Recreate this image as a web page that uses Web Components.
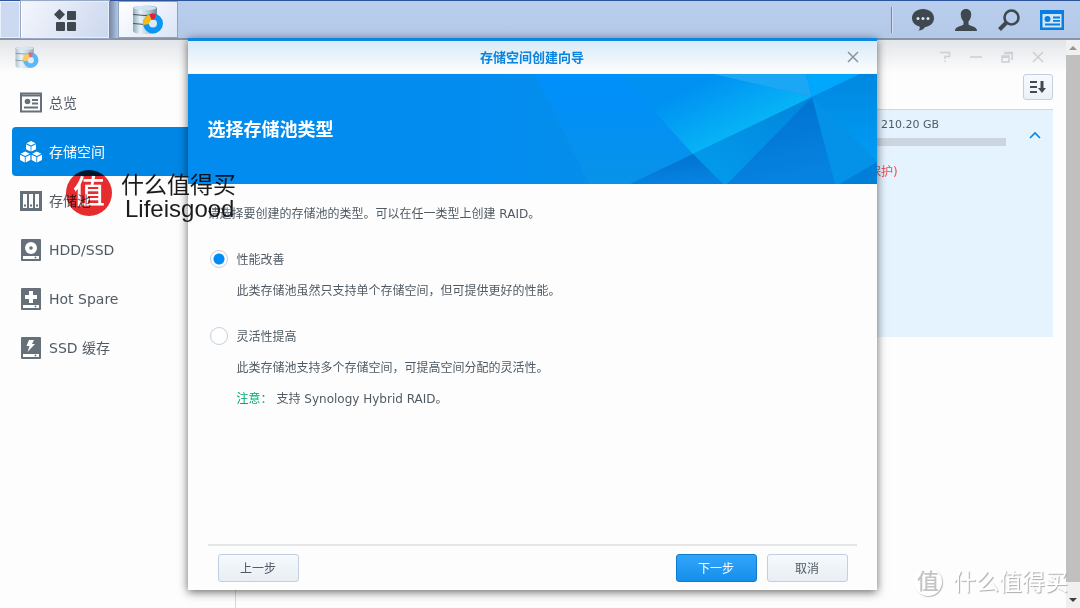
<!DOCTYPE html>
<html lang="zh-CN">
<head>
<meta charset="utf-8">
<title>存储空间管理员</title>
<style>
html,body{margin:0;height:100%}
body{font-family:"DejaVu Sans","Noto Sans CJK SC",sans-serif;font-size:12px;line-height:20px;color:#505a64;background:#fdfdfd;overflow:hidden}
</style>
</head>
<body>
<nas-desktop></nas-desktop>

<script>
const define = (name, html) => customElements.define(name, class extends HTMLElement {
  constructor() {
    super();
    const t = document.createElement('template');
    t.innerHTML = html;
    this.attachShadow({ mode: 'open' }).append(t.content.cloneNode(true));
  }
});

const icons = {
  overview: `<rect x="1" y="1.5" width="20" height="18" fill="none" stroke="currentColor" stroke-width="2"/><path d="M1 3.5h20" stroke="currentColor" stroke-width="2"/><circle cx="7.5" cy="9.5" r="2.8" fill="currentColor"/><path d="M12 8h6M12 11.5h6M4 15.5h14" stroke="currentColor" stroke-width="1.8"/>`,
  volume: `<g fill="currentColor"><path d="M11 0l4.6 2.2L11 4.6 6.4 2.2z"/><path d="M6 3.2l4.6 2.3v5L6 8.200z"/><path d="M16 3.200l-4.600 2.300v5l4.600-2.300z"/><path d="M5.200 10.500l4.600 2.200-4.600 2.400L.6 12.700z"/><path d="M0 13.700l4.800 2.300v5.500L0 19z"/><path d="M10.400 13.700L5.700 16v5.500l4.700-2.500z"/><path d="M16.800 10.500l4.600 2.200-4.600 2.400-4.600-2.400z"/><path d="M11.600 13.700l4.700 2.300v5.500L11.600 19z"/><path d="M22 13.700L17.200 16v5.500L22 19z"/></g>`,
  pool: `<path fill="currentColor" fill-rule="evenodd" d="M0 1h22v20H0zM3 4v14h4V4zm6 0v14h4V4zm6 0v14h4V4z"/><path d="M4 15.500h2M10 15.500h2M16 15.500h2" stroke="currentColor" stroke-width="2"/>`,
  hdd: `<rect x="1" y="0" width="20" height="22" rx="1" fill="currentColor"/><circle cx="11" cy="9" r="6" fill="#fff"/><circle cx="11" cy="9" r="1.800" fill="currentColor"/><path d="M3 17h16v3H3z" fill="#fff"/><circle cx="15.500" cy="18.500" r=".9" fill="currentColor"/>`,
  spare: `<rect x="1" y="0" width="20" height="22" rx="1" fill="currentColor"/><path d="M9 3h4v4h4v4h-4v4H9v-4H5V7h4zM3 17h16v3H3z" fill="#fff"/><circle cx="15.500" cy="18.500" r=".9" fill="currentColor"/>`,
  cache: `<rect x="1" y="0" width="20" height="22" rx="1" fill="currentColor"/><path d="M9 3h5l-2 4h3l-7.500 8 2-6H6.500zM3 17h16v3H3z" fill="#fff"/><circle cx="15.500" cy="18.500" r=".9" fill="currentColor"/>`
};

define('storage-logo', `
<style>:host{display:block;width:30px;height:30px}svg{display:block;width:100%;height:100%}</style>
<svg viewBox="0 0 30 30" aria-hidden="true">
 <defs><linearGradient id="c"><stop stop-color="#8fa9b9"/><stop offset=".3" stop-color="#e6f3fa"/><stop offset=".65" stop-color="#b4cad8"/><stop offset="1" stop-color="#6d8a9d"/></linearGradient></defs>
 <path d="M0 3q0-2.500 12-2.500T24 3v23q0 3-12 3T0 26z" fill="url(#c)"/>
 <ellipse cx="12" cy="3" rx="11.500" ry="2" fill="#cfe3f0"/>
 <path d="M0 9.500q12 2 24 0M0 18.500q12 2 24 0" fill="none" stroke="#47545e"/>
 <circle cx="20" cy="18.500" r="7" fill="#dbe9f2" stroke="#0a96f5" stroke-width="6"/>
 <path d="M13.100 19.500A7 7 0 0 1 17.500 12" fill="none" stroke="#fdb813" stroke-width="6"/>
 <path d="M17.500 12a7 7 0 0 1 4.500 -.2" fill="none" stroke="#e8202c" stroke-width="6"/>
</svg>`);

define('task-bar', `
<style>
:host{display:flex;box-sizing:border-box;height:40px;align-items:stretch;background:linear-gradient(#b9cdec,#b4c8e8);border-top:1px solid #2c559c;border-bottom:2px solid #8795a6}
button{all:unset;box-sizing:border-box;display:flex;align-items:center;justify-content:center}
.edge{width:20px;box-sizing:border-box;background:#ccd9f1;border:1px solid #eaf0fa}
.menu{width:88px;margin-left:1px;background:linear-gradient(120deg,#f4f6fc,#ccd8ef);border:1px solid #e8eefa;border-left-color:#fff;outline:1px solid #98a9c6}
.slot{width:9px;background:linear-gradient(90deg,#7283a3,#b4c7e8)}
.app{width:60px;background:linear-gradient(135deg,#fff,#dbe4f6);border:1px solid #fff;outline:1px solid #8fa1c0;outline-offset:-1px}
.tray{margin-left:auto;display:flex;align-items:center;padding-right:7px}
.tray i{width:1px;height:26px;background:#7186ab;border-right:1px solid #d3e0f5;margin-right:8px}
.tray button{width:43px;height:37px}
svg{display:block}
</style>
<span class="edge"></span>
<button class="menu" aria-label="主菜单"><svg width="22" height="22" viewBox="0 0 22 22" fill="#3f474f"><path d="M5.500 0L11 5.500 5.500 11 0 5.500z"/><rect x="13" y="2" width="9" height="9" rx="1"/><rect x="2" y="13" width="9" height="9" rx="1"/><rect x="13" y="13" width="9" height="9" rx="1"/></svg></button>
<span class="slot"></span>
<button class="app" aria-label="存储空间管理员"><storage-logo></storage-logo></button>
<div class="tray"><i></i>
<button aria-label="通知"><svg width="22" height="22" viewBox="0 0 22 22"><path d="M11 0c6 0 11 3.800 11 9s-4 8.500-9 9c-1 2-3.500 3.500-6.500 3.500 1.200-1 1.500-2.500 1-4C3 16.500 0 13 0 9c0-5.200 5-9 11-9z" fill="#3f474f"/><g fill="#dbe6f6"><circle cx="6" cy="9.500" r="1.500"/><circle cx="11" cy="9.500" r="1.500"/><circle cx="16" cy="9.500" r="1.500"/></g></svg></button>
<button aria-label="用户"><svg width="22" height="22" viewBox="0 0 22 22"><path d="M11 0c3.500 0 5.500 2.500 5.200 6-.2 3-1.400 5-2.700 6.500v3c1 1.500 8.500 1.500 8.500 6.500H0c0-5 7.500-5 8.500-6.500v-3C7.200 11 6 9 5.800 6 5.500 2.500 7.500 0 11 0z" fill="#3f474f"/></svg></button>
<button aria-label="搜索"><svg width="22" height="22" viewBox="0 0 22 22" fill="none" stroke="#3f474f"><circle cx="13.500" cy="8.500" r="7" stroke-width="2.600"/><path d="M8.500 13.500L1.500 20.500" stroke-width="4"/></svg></button>
<button aria-label="小工具"><svg width="24" height="20" viewBox="0 0 24 20"><path d="M0 0h24v20H0z" fill="#087fe0"/><path d="M2.500 4h19v13.500h-19z" fill="#d2e6fa"/><circle cx="7.500" cy="9" r="3" fill="#087fe0"/><path d="M13 7.500h7M13 10.800h7M5 14.500h15" stroke="#087fe0" stroke-width="1.800"/></svg></button>
</div>`);

customElements.define('nav-item', class extends HTMLElement {
  connectedCallback() {
    const on = this.hasAttribute('selected');
    this.attachShadow({ mode: 'open' }).innerHTML = `
<style>
:host{display:block}
a{display:flex;align-items:center;gap:7px;height:49px;padding-left:8px;border-radius:4px;font-size:14px;color:#505a64;text-decoration:none}
a svg{width:22px;height:22px;color:#66707a;flex:none}
a.on{background:#0086e5;color:#fff}a.on svg{color:#fff}
</style>
<a href="#${this.getAttribute('icon')}" ${on ? 'class="on" aria-current="page"' : ''}><svg viewBox="0 0 22 22" aria-hidden="true">${icons[this.getAttribute('icon')]}</svg><slot></slot></a>`;
  }
});

define('side-nav', `
<style>:host{display:block;box-sizing:border-box;width:236px;flex:none;border-right:1px solid #d8d8d8;padding:0 0 0 12px}nav{display:block}</style>
<nav><slot></slot></nav>`);

define('volume-card', `
<style>
:host{display:flex;box-sizing:border-box;height:228px;background:#e5f3ff;border-top:1px solid #c9dbe8}
.body{flex:1}
.info{box-sizing:border-box;width:137px;margin-left:auto}
.size{padding:6px 0 0 12px;font-size:11px;line-height:18px}
.bar{height:8px;background:#ccd4df;margin:4px 0 16px}
.state{color:#f05050}
button{all:unset;box-sizing:border-box;width:47px;height:50px;display:flex;align-items:center;justify-content:center;padding-left:10px}
</style>
<div class="body"><div class="info size"><slot name="size"></slot></div><div class="bar"></div><div class="info state"><slot name="state"></slot></div></div>
<button aria-label="收起"><svg width="12" height="8" viewBox="0 0 12 8" fill="none" stroke="#0086e5" stroke-width="1.600"><path d="M1 7l5-5 5 5"/></svg></button>`);

define('storage-window', `
<style>
:host{display:flex;flex-direction:column;min-width:0;flex:1;background:linear-gradient(#e2e5e9,#fdfdfd 32px)}
header{display:flex;align-items:flex-start;height:38px;box-sizing:border-box;padding:6px 13px 0 15px}
storage-logo{width:24px;height:23px;opacity:.65}
.ctl{margin-left:auto;display:flex}
.ctl button{all:unset;width:31px;height:22px;display:flex;align-items:center;justify-content:center}
.ctl svg{fill:none;stroke:#ccd0d3;stroke-width:1.500}
.cols{flex:1;display:flex;min-height:0}
main{flex:1;padding:0 13px 0 20px;min-width:0;margin-top:-4px}
.tools{display:flex;justify-content:flex-end;height:35px}
.sort{all:unset;box-sizing:border-box;width:30px;height:26px;border:1px solid #c3cede;border-radius:3px;background:linear-gradient(#f6fafd,#ecf1f6);display:flex;align-items:center;justify-content:center}
</style>
<header><storage-logo></storage-logo><div class="ctl">
<button aria-label="帮助"><svg width="12" height="12" viewBox="0 0 12 12"><path d="M1 1.500h9.500v4H6V8M6 9.500V11"/></svg></button>
<button aria-label="最小化"><svg width="12" height="12" viewBox="0 0 12 12"><path d="M0 6h12"/></svg></button>
<button aria-label="还原"><svg width="12" height="12" viewBox="0 0 12 12"><path d="M1 5h7v6H1zM1 6.200h7M4 3.500V1.500h7.300V8H10M4 2.500h7"/></svg></button>
<button aria-label="关闭"><svg width="12" height="12" viewBox="0 0 12 12"><path d="M1 1l10 10M11 1L1 11"/></svg></button>
</div></header>
<div class="cols">
<side-nav>
<nav-item icon="overview">总览</nav-item>
<nav-item icon="volume" selected>存储空间</nav-item>
<nav-item icon="pool">存储池</nav-item>
<nav-item icon="hdd">HDD/SSD</nav-item>
<nav-item icon="spare">Hot Spare</nav-item>
<nav-item icon="cache">SSD 缓存</nav-item>
</side-nav>
<main><div class="tools"><button class="sort" aria-label="排序"><svg width="16" height="14" viewBox="0 0 16 14"><path d="M0 2h7M0 7h7M0 12h7" stroke="#404a54" stroke-width="2"/><path d="M10.500 1h3v7H16l-4 5-4-5h2.500z" fill="#404a54"/></svg></button></div>
<volume-card><span slot="size">210.20 GB</span><span slot="state">保护)</span></volume-card></main>
</div>`);

define('scroll-rail', `
<style>
:host{display:flex;flex-direction:column;width:14px;flex:none;background:#f0f0f0}
i{height:15px;display:flex;align-items:center;justify-content:center}
i:last-child{height:26px;padding-top:9px;box-sizing:border-box}
b{flex:1;background:#c0c0c0}
</style>
<i><svg width="8" height="4"><path d="M4 0l4 4H0z" fill="#949494"/></svg></i><b></b><i><svg width="8" height="4"><path d="M0 0h8L4 4z" fill="#404040"/></svg></i>`);

define('pool-option', `
<style>
:host{display:grid;grid-template-columns:29px 1fr;row-gap:11px;margin-top:26px}
label{display:contents}
input{appearance:none;box-sizing:border-box;width:18px;height:18px;margin:0 0 0 2px;border:1px solid #c2cfe0;border-radius:50%;background:#fff}
input:checked{background:radial-gradient(circle,#008cf5 5px,#fff 6px)}
.more{grid-column:2;display:grid;row-gap:11px}
</style>
<label><input type="radio" name="pool"><span><slot name="name"></slot></span></label>
<div class="more"><slot></slot></div>`);

define('wizard-button', `
<style>
:host{display:block}
button{box-sizing:border-box;width:81px;height:28px;padding:2px 0 0;border:1px solid #c3cede;border-radius:3px;background:linear-gradient(#f5fafe,#e8eef3);font:inherit;line-height:20px;color:#505a64;display:block}
:host([primary]) button{border-color:#0b7cd0;background:linear-gradient(#33a5fb,#148fea);color:#fff}
</style><button><slot></slot></button>`);

define('wizard-dialog', `
<style>
:host{display:flex;flex-direction:column;box-sizing:border-box;width:689px;max-width:100%;background:#fdfdfd;border-top:3px solid #0a88e2;box-shadow:0 2px 9px rgba(0,0,0,.6)}
header{display:grid;grid-template-columns:48px 1fr 48px;align-items:center;height:32px;border-bottom:1px solid #f2f6fa;background:linear-gradient(#d8eaf8,#fdfdfd)}
h1{grid-column:2;margin:0;padding-top:2px;text-align:center;font-size:13px;line-height:20px;color:#0a84de}
header button{all:unset;height:32px;display:flex;align-items:center;justify-content:center}
.banner{display:grid;height:110px;background:#028cf0;align-items:center}
.banner>*{grid-area:1/1}
.banner svg{width:100%;height:110px;display:block}
h2{margin:0;padding:2px 0 0 20px;font-size:18px;line-height:24px;color:#fff}
.body{flex:1;padding:20px 20px 0}
footer{display:flex;gap:10px;margin:0 20px;padding:8px 9px 8px 10px;border-top:2px solid #e4e5e6}
wizard-button:first-child{margin-right:auto}
p{margin:0}
.note{color:#00a970;margin-right:4px}
</style>
<header><h1>存储空间创建向导</h1><button aria-label="关闭"><svg width="12" height="12" fill="none" stroke="#8a949e" stroke-width="1.500"><path d="M1 1l10 10M11 1L1 11"/></svg></button></header>
<div class="banner">
<svg viewBox="0 0 689 110" preserveAspectRatio="xMaxYMid slice" aria-hidden="true">
<defs>
<linearGradient id="a" x1="0" y1="0" x2="1" y2="0"><stop stop-color="#028cf0"/><stop offset="1" stop-color="#058eea"/></linearGradient>
<linearGradient id="b" x1="0" y1="0" x2="0" y2="1"><stop stop-color="#008ffd"/><stop offset="1" stop-color="#0892e8"/></linearGradient>
<linearGradient id="c" gradientUnits="userSpaceOnUse" x1="528" y1="0" x2="558" y2="60"><stop stop-color="#0091f2"/><stop offset="1" stop-color="#07b6f6"/></linearGradient>
<linearGradient id="d" x1="0" y1="0" x2=".3" y2="1"><stop stop-color="#006fcd"/><stop offset="1" stop-color="#0682e0"/></linearGradient>
<linearGradient id="e" x1="1" y1="0" x2="0" y2="1"><stop stop-color="#0084dc"/><stop offset="1" stop-color="#039ded"/></linearGradient>
<linearGradient id="f" x1="0" y1="0" x2="0" y2="1"><stop stop-color="#0088e0"/><stop offset="1" stop-color="#009cf5"/></linearGradient>
</defs>
<path d="M290 0h58l54 110H290z" fill="url(#a)"/>
<path d="M347 0h88l71 80-64 30h-41z" fill="url(#b)"/>
<path d="M432 0h93l99 23-119 57z" fill="url(#c)"/>
<path d="M525 0h93l6 23z" fill="#1ba7f3"/>
<path d="M618 0h54l-48 23z" fill="#00a8fd"/>
<path d="M672 0h17v88l-65-65z" fill="url(#f)"/>
<path d="M624 23l65 64v1l-37 22h-5z" fill="#0492e9"/>
<path d="M689 88v22h-37z" fill="#007fd9"/>
<path d="M624 23l23 87H539z" fill="url(#d)"/>
<path d="M624 23l-85 87h-4l-30-30z" fill="url(#e)"/>
<path d="M505 80l30 30h-93z" fill="url(#d)"/>
</svg>
<h2>选择存储池类型</h2></div>
<div class="body">
<p>请选择要创建的存储池的类型。可以在任一类型上创建 RAID。</p>
<pool-option><span slot="name">性能改善</span><span>此类存储池虽然只支持单个存储空间，但可提供更好的性能。</span></pool-option>
<pool-option><span slot="name">灵活性提高</span><span>此类存储池支持多个存储空间，可提高空间分配的灵活性。</span><div><span class="note">注意：</span><span>支持 Synology Hybrid RAID。</span></div></pool-option>
</div>
<footer><wizard-button>上一步</wizard-button><wizard-button primary>下一步</wizard-button><wizard-button>取消</wizard-button></footer>`);

define('brand-mark', `
<style>
:host{display:flex;align-items:center;pointer-events:none;gap:9px;font-size:23px;line-height:24px;color:#1c1c1c}
.seal{width:46px;height:46px;border-radius:50%;background:#e92c30;color:#fff;font-weight:500;font-size:32px;line-height:44px;text-align:center;flex:none}
.words{padding-top:8px}
.sub{font-family:"Liberation Sans",sans-serif;font-size:24px;padding-left:4px}
:host([pale]){color:#fff;gap:11px;text-shadow:1px 1px 1px #aaa}
:host([pale]) .words{padding-top:0}
:host([pale]) .seal{width:28px;height:28px;background:#fff;color:#c4c4c4;font-size:22px;line-height:27px;text-shadow:none;box-shadow:1px 1px 1px #bbb}
:host([pale]) .sub{display:none}
</style>
<span class="seal">值</span><div class="words"><div>什么值得买</div><div class="sub"><slot></slot></div></div>`);

define('nas-desktop', `
<style>
:host{display:flex;flex-direction:column;min-height:100vh;position:relative}
.view{display:flex;flex:1}
.modal{position:absolute;inset:38px 16px 18px 0;display:flex;justify-content:center}
.top{position:absolute;left:66px;top:165px;mix-blend-mode:multiply}
.bottom{position:absolute;right:12px;bottom:12px}
</style>
<task-bar></task-bar>
<div class="view"><storage-window></storage-window><scroll-rail></scroll-rail></div>
<div class="modal"><wizard-dialog></wizard-dialog></div>
<brand-mark class="top">Lifeisgood</brand-mark>
<brand-mark class="bottom" pale></brand-mark>`);

const dialog = document.querySelector('nas-desktop').shadowRoot.querySelector('wizard-dialog').shadowRoot;
const radios = [...dialog.querySelectorAll('pool-option')].map(o => o.shadowRoot.querySelector('input'));
radios[0].checked = true;
radios.forEach(r => r.addEventListener('change', () => radios.forEach(x => { x.checked = x === r; })));
</script>
</body>
</html>
